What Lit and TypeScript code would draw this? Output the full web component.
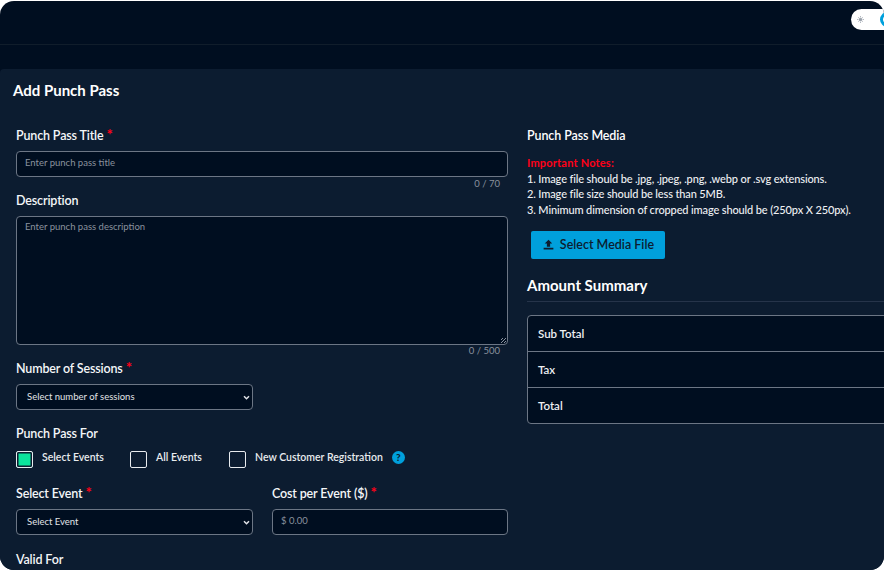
import { LitElement, html, css } from 'lit';
import { customElement } from 'lit/decorators.js';

@customElement('app-root')
export class AppRoot extends LitElement {
  static styles = css`
    :host {
      display: block;
      width: 884px;
      height: 570px;
      background: #fff;
      overflow: hidden;
      font-family: Lato, 'Open Sans', sans-serif;
      color: #fff;
    }
    .shell {
      margin-top: 1px;
      height: 569px;
      background: #000e20;
      border-radius: 14px;
      overflow: hidden;
      display: flex;
      flex-direction: column;
    }
    .topbar {
      height: 44px;
      flex: none;
      border-bottom: 1px solid #101d2b;
      display: flex;
      justify-content: flex-end;
      align-items: flex-start;
      padding-top: 8px;
      box-sizing: border-box;
    }
    .toggle {
      width: 33px;
      height: 21px;
      background: #fff;
      border-radius: 10.5px 0 0 10.5px;
      display: flex;
      align-items: center;
      padding-left: 6px;
      gap: 16px;
      box-sizing: border-box;
      overflow: hidden;
    }
    .toggle svg { flex: none; }
    .knob {
      flex: none;
      width: 15px;
      height: 15px;
      border-radius: 50%;
      border: 3px solid #00a0dc;
      box-sizing: border-box;
    }
    .subbar { height: 24px; flex: none; }
    .panel {
      flex: 1;
      background: #0c1c30;
      border-radius: 4px 4px 0 0;
      min-height: 0;
    }
    h1 {
      margin: 0;
      padding: 12px 0 0 13px;
      font-size: 15px;
      line-height: 18px;
      font-weight: 700;
    }
    .cols {
      display: grid;
      grid-template-columns: 492px 492px;
      column-gap: 19px;
      padding: 29px 0 0 16px;
    }
    .label {
      font-size: 12.5px;
      letter-spacing: -0.15px;
      line-height: 16px;
      font-weight: 600;
      color: #f4f6f8;
    }
    .req { color: #ff0018; font-size: 15px; line-height: 12px; font-weight: 700; }
    .field {
      display: block;
      width: 100%;
      box-sizing: border-box;
      background: #000e20;
      border: 1px solid #6c7685;
      border-radius: 4px;
      color: #8a929e;
      font-size: 9.5px;
      line-height: 12px;
    }
    .input { height: 26px; padding: 5px 8px; margin-top: 7px; }
    .area { height: 129px; padding: 4px 8px; margin-top: 7px; position: relative; }
    .grip {
      position: absolute;
      right: 1px;
      bottom: 1px;
      width: 5px;
      height: 5px;
      background: repeating-linear-gradient(135deg, transparent 0 1px, #8a929e 1px 2px);
    }
    .count {
      text-align: right;
      padding-right: 8px;
      font-size: 9.5px;
      line-height: 12px;
      color: #8a929e;
      margin-top: 1px;
    }
    .count.tight { margin-top: 0; }
    .select {
      width: 237px;
      height: 26px;
      padding: 0 2px 0 10px;
      margin-top: 7px;
      display: flex;
      align-items: center;
      justify-content: space-between;
      color: #e0e3e7;
    }
    .desc-label { margin-top: 3px; }
    .sessions-label { margin-top: 4px; }
    .for-label { margin-top: 16px; }
    .checks {
      display: flex;
      align-items: flex-start;
      margin-top: 9px;
      height: 18px;
    }
    .check {
      display: flex;
      align-items: flex-start;
      font-size: 10.5px;
      line-height: 12px;
      font-weight: 600;
      color: #e8ebee;
    }
    .check.select-events { width: 114px; }
    .check.all-events { width: 99px; }
    .box {
      flex: none;
      width: 17px;
      height: 17px;
      box-sizing: border-box;
      border: 1.5px solid #e8ebee;
      border-radius: 2px;
      margin-right: 9px;
    }
    .box.on { background: #0be39b; box-shadow: inset 0 0 0 1.5px #0c1c30; }
    .help {
      flex: none;
      width: 13px;
      height: 13px;
      border-radius: 50%;
      background: #00a0dc;
      color: #0c1c30;
      font-size: 10px;
      line-height: 13px;
      font-weight: 900;
      text-align: center;
      margin: 0 0 0 9px;
    }
    .pair {
      display: grid;
      grid-template-columns: 237px 236px;
      column-gap: 19px;
      margin-top: 17px;
    }
    .valid { margin-top: 17px; }
    .media-label { font-size: 12.5px; letter-spacing: -0.1px; line-height: 16px; font-weight: 600; }
    .notes {
      margin-top: 11px;
      font-size: 11px;
      letter-spacing: -0.13px;
      line-height: 15.6px;
      color: #eef0f3;
      font-weight: 500;
    }
    .notes strong { color: #ff0018; display: block; font-weight: 700; letter-spacing: 0.2px; }
    .btn {
      margin: 14px 0 0 4px;
      width: 134px;
      height: 28px;
      padding-bottom: 1px;
      box-sizing: border-box;
      background: #00a0dc;
      border-radius: 2px;
      display: flex;
      align-items: center;
      justify-content: center;
      gap: 5px;
      color: #0c1c30;
      font-size: 12.5px;
      font-weight: 600;
    }
    h2 {
      margin: 16px 0 0;
      font-size: 15px;
      line-height: 20px;
      font-weight: 700;
      padding-bottom: 6px;
      border-bottom: 1px solid #26344a;
    }
    .summary {
      margin-top: 13px;
      border: 1px solid #6c7685;
      border-radius: 4px;
      background: #000e20;
      overflow: hidden;
    }
    .row {
      height: 35px;
      display: flex;
      align-items: center;
      padding-left: 10px;
      font-size: 11.5px;
      font-weight: 600;
      color: #eef0f3;
    }
    .row + .row { border-top: 1px solid #6c7685; }
  `;

  render() {
    return html`
      <div class="shell">
        <div class="topbar">
          <div class="toggle">
            <svg width="7" height="7" viewBox="0 0 14 14" fill="none" stroke="#9aa1ab" stroke-width="1.5">
              <circle cx="7" cy="7" r="3" fill="#9aa1ab" />
              <path d="M7 0v2M7 12v2M0 7h2M12 7h2M2 2l1.5 1.5M10.5 10.5L12 12M2 12l1.5-1.5M10.5 3.5L12 2" />
            </svg>
            <span class="knob"></span>
          </div>
        </div>
        <div class="subbar"></div>
        <div class="panel">
          <h1>Add Punch Pass</h1>
          <div class="cols">
            <div>
              <div class="label">Punch Pass Title <span class="req">*</span></div>
              <div class="field input">Enter punch pass title</div>
              <div class="count">0 / 70</div>
              <div class="label desc-label">Description</div>
              <div class="field area">Enter punch pass description<span class="grip"></span></div>
              <div class="count tight">0 / 500</div>
              <div class="label sessions-label">Number of Sessions <span class="req">*</span></div>
              <div class="field select">Select number of sessions ${this.chevron()}</div>
              <div class="label for-label">Punch Pass For</div>
              <div class="checks">
                <div class="check select-events"><span class="box on"></span>Select Events</div>
                <div class="check all-events"><span class="box"></span>All Events</div>
                <div class="check"><span class="box"></span>New Customer Registration<span class="help">?</span></div>
              </div>
              <div class="pair">
                <div>
                  <div class="label">Select Event <span class="req">*</span></div>
                  <div class="field select">Select Event ${this.chevron()}</div>
                </div>
                <div>
                  <div class="label">Cost per Event ($) <span class="req">*</span></div>
                  <div class="field input">$ 0.00</div>
                </div>
              </div>
              <div class="label valid">Valid For</div>
            </div>
            <div>
              <div class="media-label">Punch Pass Media</div>
              <div class="notes">
                <strong>Important Notes:</strong>
                1. Image file should be .jpg, .jpeg, .png, .webp or .svg extensions.<br />
                2. Image file size should be less than 5MB.<br />
                3. Minimum dimension of cropped image should be (250px X 250px).
              </div>
              <div class="btn">
                <svg width="13" height="13" viewBox="0 0 24 24" fill="#0c1c30">
                  <path d="M9 16h6v-6h4l-7-7-7 7h4zM3 18h18v3H3z" />
                </svg>
                Select Media File
              </div>
              <h2>Amount Summary</h2>
              <div class="summary">
                <div class="row">Sub Total</div>
                <div class="row">Tax</div>
                <div class="row">Total</div>
              </div>
            </div>
          </div>
        </div>
      </div>
    `;
  }

  chevron() {
    return html`<svg width="7" height="5" viewBox="0 0 8 6" fill="none" stroke="#e0e3e7" stroke-width="1.8">
      <path d="M1 1.5l3 3 3-3" />
    </svg>`;
  }
}
